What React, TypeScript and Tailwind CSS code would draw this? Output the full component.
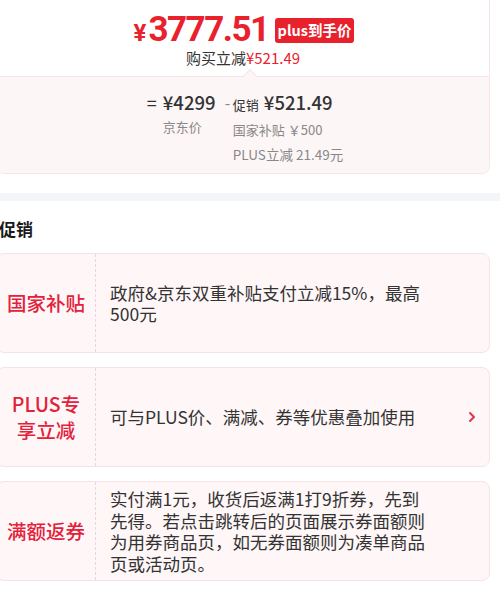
import React from "react";

const Chevron = () => (
  <svg width="8" height="12" viewBox="0 0 8 12" fill="none">
    <path d="M2 2l4 4-4 4" stroke="#e0354f" strokeWidth="2" strokeLinecap="round" strokeLinejoin="round" />
  </svg>
);

type CardProps = { label: React.ReactNode; desc: string; arrow?: boolean };

const PromoCard = ({ label, desc, arrow }: CardProps) => (
  <div className="flex h-[100px] w-[494px] rounded-[8px] border border-[#f6e3e6] bg-[#fef6f7]">
    <div className="flex w-[99px] shrink-0 items-center justify-center whitespace-nowrap border-r border-dashed border-[#e9d6d9] text-center text-[19.5px] font-medium leading-[26px] text-[#e3213a]">
      <div>{label}</div>
    </div>
    <div className="flex w-[336px] shrink-0 items-center pl-[14px] text-[17.5px] leading-[21.5px] text-[#333333]">
      <div>{desc}</div>
    </div>
    <div className="flex flex-1 items-center justify-end pr-[13px]">{arrow ? <Chevron /> : null}</div>
  </div>
);

export default function App() {
  return (
    <div
      className="h-[595px] w-[500px] overflow-hidden bg-white"
      style={{ fontFamily: '"Noto Sans CJK SC", "Noto Sans", sans-serif' }}
    >
      {/* top price card */}
      <div className="ml-[-4px] w-[494px] overflow-hidden rounded-b-[8px] border border-t-0 border-[#f6e6e8]">
        <div className="flex h-[76px] flex-col items-center pt-[10px]">
          <div className="flex h-[40px] items-center pl-[2px]">
            <div className="flex items-baseline text-[#e8212d]" style={{ fontFamily: 'Roboto, "Noto Sans", sans-serif' }}>
              <span className="mr-[2px] text-[24px] font-bold">¥</span>
              <span className="text-[35px] font-bold tracking-[-1.5px]">3777.51</span>
            </div>
            <div className="ml-[6px] flex h-[25px] items-center rounded-[3px] bg-[#e8212d] px-[3px] text-[14.5px] font-bold leading-none text-white">
              plus到手价
            </div>
          </div>
          <div className="mt-[-1px] text-[15px] leading-[18px] text-[#333333]">
            购买立减<span className="text-[#e8212d]">¥521.49</span>
          </div>
        </div>
        <div className="relative h-[97px] border-t border-[#f6e6e8] bg-[#fdf6f7]">
          <div className="absolute left-[248px] top-[-6px] h-[10px] w-[10px] rotate-45 border-l border-t border-[#f6e6e8] bg-[#fdf6f7]" />
          <div className="flex justify-center pl-[4px] pt-[12px]">
            <div className="flex items-start text-[#333333]">
              <span className="w-[16px] text-[18px] leading-[26px]">=</span>
              <div className="flex w-[62px] flex-col">
                <span className="text-[18.5px] font-medium leading-[26px]">¥4299</span>
                <span className="text-[13px] leading-[24px] text-[#888888]">京东价</span>
              </div>
              <span className="w-[8px] text-[16px] leading-[26px] text-[#888888]">-</span>
              <div className="flex flex-col">
                <span className="leading-[26px]">
                  <span className="mr-[5px] text-[13px]">促销</span>
                  <span className="text-[18.5px] font-medium">¥521.49</span>
                </span>
                <span className="text-[13px] leading-[24px] text-[#888888]">国家补贴 ￥500</span>
                <span className="text-[13.5px] leading-[24px] text-[#888888]">PLUS立减 21.49元</span>
              </div>
            </div>
          </div>
        </div>
      </div>

      <div className="mt-[19px] h-[8px] w-full bg-[#f3f5f8]" />

      <div className="ml-[-4px] w-[494px]">
        <div className="mt-[16px] pl-[3px] text-[17px] font-bold leading-[24px] text-[#1a1a1a]">促销</div>
        <div className="mt-[12px] flex flex-col gap-[14px]">
          <PromoCard label="国家补贴" desc="政府&京东双重补贴支付立减15%，最高500元" />
          <PromoCard
            label={
              <>
                PLUS专
                <br />
                享立减
              </>
            }
            desc="可与PLUS价、满减、券等优惠叠加使用"
            arrow
          />
          <PromoCard
            label="满额返券"
            desc="实付满1元，收货后返满1打9折券，先到先得。若点击跳转后的页面展示券面额则为用券商品页，如无券面额则为凑单商品页或活动页。"
          />
        </div>
      </div>
    </div>
  );
}
